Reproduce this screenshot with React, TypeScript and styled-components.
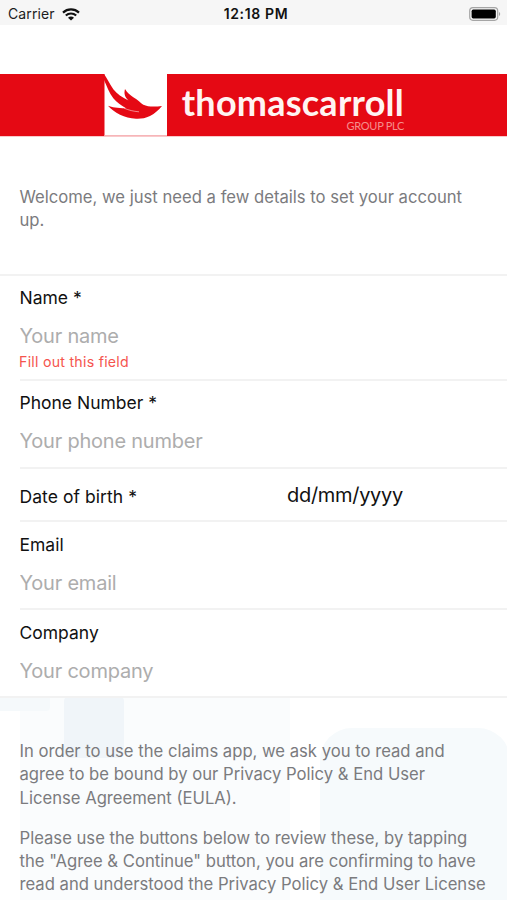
import React from 'react';
import styled, { createGlobalStyle } from 'styled-components';

const GlobalStyle = createGlobalStyle`
  * { box-sizing: border-box; }
  body { margin: 0; background: #fff; font-family: Inter, sans-serif; }
`;

const Screen = styled.main`
  height: 900px;
  overflow: hidden;
  display: flex;
  flex-direction: column;
  background: #fff;
`;

const StatusBar = styled.header`
  flex: none;
  height: 25px;
  padding: 3px 6px 0 8px;
  display: grid;
  grid-template-columns: 1fr auto 1fr;
  align-items: center;
  background: #f6f6f6;
  color: #1c1c1c;
  font-size: 14px;
  line-height: 22px;
`;

const Carrier = styled.div`
  display: flex;
  align-items: center;
  gap: 7px;
  letter-spacing: 0.1px;
`;

const Clock = styled.time`
  padding-left: 3px;
  color: #111;
  font-weight: 600;
  letter-spacing: 0.65px;
`;

const BatteryIcon = styled.svg`
  justify-self: end;
`;

const Banner = styled.div`
  flex: none;
  height: 62px;
  margin-top: 49px;
  padding-left: 104px;
  display: flex;
  background: #e50914;
  box-shadow: 0 1px 0 #f9c9cb;
`;

const LogoText = styled.div`
  width: 237px;
  padding-top: 10px;
  display: flex;
  flex-direction: column;
  align-items: flex-end;
  font-family: Lato, sans-serif;
`;

const LogoName = styled.div`
  color: #fff4f2;
  font-size: 36px;
  font-weight: 700;
  line-height: 36px;
  letter-spacing: 0.24px;
`;

const LogoGroup = styled.div`
  color: #f58f8c;
  font-size: 11px;
  line-height: 12px;
  letter-spacing: -0.3px;
`;

const Copy = styled.p`
  margin: 0 0 17px;
  color: #7b7b7e;
  font-size: 16.65px;
  line-height: 23.3px;
  white-space: pre-line;
`;

const Intro = styled.section`
  flex: none;
  height: 138px;
  padding: 50px 20px 0 19.5px;
`;

const Form = styled.form`
  flex: none;
  border-top: 2px solid #f2f2f2;
`;

const Row = styled.label<{ $height: number; $top?: number; $inline?: boolean; $last?: boolean }>`
  height: ${p => p.$height}px;
  margin-left: ${p => (p.$last ? 0 : 20)}px;
  padding: ${p => p.$top ?? 0}px 0 0 ${p => (p.$last ? 20 : 0)}px;
  display: flex;
  flex-direction: ${p => (p.$inline ? 'row' : 'column')};
  align-items: ${p => (p.$inline ? 'center' : 'stretch')};
  border-bottom: 2px solid #f2f2f2;
`;

const Label = styled.span<{ $wide?: boolean }>`
  width: ${p => (p.$wide ? '267.5px' : 'auto')};
  padding-top: ${p => (p.$wide ? '4px' : 0)};
  margin-left: -0.5px;
  color: #111;
  font-size: 17.5px;
  line-height: 24px;
  letter-spacing: ${p => (p.$wide ? '0.06px' : 'normal')};
`;

const Input = styled.input`
  width: 100%;
  height: 28px;
  margin: 12px 0 0 -0.5px;
  padding: 0;
  border: 0;
  outline: 0;
  background: transparent;
  font: 400 20px/28px Inter, sans-serif;
  letter-spacing: -0.22px;
  &::placeholder { color: #adadad; opacity: 1; }
`;

const DateValue = styled.span`
  color: #111;
  font-size: 20px;
  line-height: 28px;
  letter-spacing: -0.3px;
`;

const ErrorText = styled.span`
  margin: 3px 0 0 -1px;
  color: #f5544e;
  font-size: 14.2px;
  line-height: 18px;
  letter-spacing: 0.25px;
`;

const Terms = styled.section`
  position: relative;
  flex: 1;
  min-height: 0;
  padding: 42px 16px 0 19.5px;
  overflow: hidden;
`;

const Backdrop = styled.svg`
  position: absolute;
  inset: 0;
`;

const TermsCopy = styled.div`
  position: relative;
`;

interface FieldProps {
  label: string;
  placeholder: string;
  height?: number;
  top?: number;
  error?: string;
  last?: boolean;
}

const Field = ({ label, placeholder, height = 88, top = 10, error, last }: FieldProps) => (
  <Row $height={height} $top={top} $last={last}>
    <Label>{label}</Label>
    <Input placeholder={placeholder} />
    {error && <ErrorText>{error}</ErrorText>}
  </Row>
);

export default function App() {
  return (
    <Screen>
      <GlobalStyle />
      <StatusBar>
        <Carrier>
          Carrier
          <svg width="18" height="13" viewBox="0 0 18 13" fill="none" stroke="#111" strokeWidth="2.2">
            <path d="M1 4.6C5.6.4 12.4.4 17 4.6" />
            <path d="M3.8 7.5c3-2.7 7.4-2.7 10.4 0" />
            <path d="M9 12.6 6 9.7c1.7-1.5 4.3-1.5 6 0z" fill="#111" stroke="none" />
          </svg>
        </Carrier>
        <Clock>12:18 PM</Clock>
        <BatteryIcon width="32" height="14" viewBox="0 0 32 14">
          <rect x=".7" y=".7" width="28" height="12.6" rx="3.2" fill="#f6f6f6" stroke="#a5a5a5" strokeWidth="1.2" />
          <rect x="2.6" y="2.6" width="24.2" height="8.8" rx="1.6" fill="#000" />
          <path d="M30 5v4c1.6-.6 1.6-3.4 0-4z" fill="#a5a5a5" />
        </BatteryIcon>
      </StatusBar>

      <Banner>
        <svg width="63" height="62" viewBox="0 0 63 62">
          <rect x=".5" width="62.5" height="62" fill="#fff" />
          <rect x=".5" y="61" width="62.5" height="1" fill="#f6b5b8" />
          <path
            d="M0 0C3 4 5 9 9.300 15.300C13 20 18 23.500 24.500 26.500C21 23 19.700 20 21 15C23.500 19 26 21 29.300 23.300C34 26 36.500 29 39.300 30.700C44 33 51 32.800 58 32C54.500 36 51 39.500 46 42C41 44.300 37 44.900 32 44.700C26 44.300 21 43 16 40.700C11 38.500 7 35 4 31.800C8 33.500 13 34.200 22 34.300C17 31.500 13 28.500 9.300 24.300C5 19 3 12 0 6z"
            fill="#e50914"
          />
          <path d="M20 34.200C25 36.200 29 37.300 35 37.800" fill="none" stroke="#fff" strokeWidth=".5" />
        </svg>
        <LogoText>
          <LogoName>thomascarroll</LogoName>
          <LogoGroup>GROUP PLC</LogoGroup>
        </LogoText>
      </Banner>

      <Intro>
        <Copy>{'Welcome, we just need a few details to set your account\nup.'}</Copy>
      </Intro>

      <Form>
        <Field label="Name *" placeholder="Your name" height={105} error="Fill out this field" />
        <Field label="Phone Number *" placeholder="Your phone number" />
        <Row $height={53} $inline>
          <Label $wide>Date of birth *</Label>
          <DateValue>dd/mm/yyyy</DateValue>
        </Row>
        <Field label="Email" placeholder="Your email" top={11} />
        <Field label="Company" placeholder="Your company" top={11} last />
      </Form>

      <Terms>
        <Backdrop width="507" height="202" viewBox="0 0 507 202">
          <rect x="20" y="-10" width="270" height="212" fill="#fafcfd" />
          <rect x="-10" y="-10" width="60" height="23" rx="4" fill="#f5f9fb" />
          <rect x="64" y="-2" width="60" height="62" rx="5" fill="#f0f5f9" />
          <rect x="320" y="30" width="190" height="230" rx="32" fill="#f6fafc" />
        </Backdrop>
        <TermsCopy>
          <Copy>
            {'In order to use the claims app, we ask you to read and\nagree to be bound by our Privacy Policy & End User\nLicense Agreement (EULA).'}
          </Copy>
          <Copy>
            {'Please use the buttons below to review these, by tapping\nthe "Agree & Continue" button, you are confirming to have\nread and understood the Privacy Policy & End User License'}
          </Copy>
        </TermsCopy>
      </Terms>
    </Screen>
  );
}
